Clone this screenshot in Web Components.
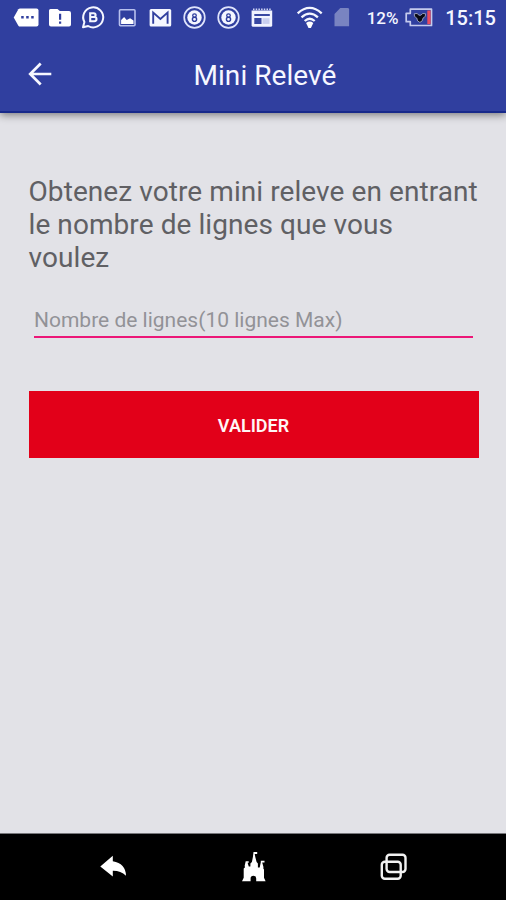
<!DOCTYPE html>
<html lang="fr">
<head>
<meta charset="utf-8">
<title>Mini Relevé</title>
<style>
html,body{margin:0;height:100%;background:#e2e2e7;overflow:hidden}
body{font-family:Roboto,"Liberation Sans",sans-serif}
</style>
</head>
<body>
<mini-app>
  <status-bar slot="status"></status-bar>
  <title-bar slot="header">Mini Relevé</title-bar>
  <intro-text>Obtenez votre mini releve en entrant le nombre de lignes que vous<br>voulez</intro-text>
  <line-field>Nombre de lignes(10 lignes Max)</line-field>
  <submit-button>VALIDER</submit-button>
  <nav-bar slot="nav"></nav-bar>
</mini-app>
<script>
function define(name, html) {
  const t = document.createElement('template');
  t.innerHTML = html;
  customElements.define(name, class extends HTMLElement {
    constructor() {
      super();
      this.attachShadow({mode: 'open'}).append(t.content.cloneNode(true));
    }
  });
}

define('mini-app', `<style>
:host{display:flex;flex-direction:column;height:900px;width:506px;background:#e2e2e7}
main{flex:1;padding:62px 27px 0 28.5px;display:flex;flex-direction:column}
</style>
<slot name="status"></slot><slot name="header"></slot><main><slot></slot></main><slot name="nav"></slot>`);

const ring = `<svg viewBox="0 0 24 24"><circle cx="11.5" cy="12.5" r="10.3" fill="none" stroke="#dfe4fb" stroke-width="1.7"/><circle cx="11.5" cy="12.5" r="7.2" fill="#f4f6ff"/><circle cx="11.5" cy="10.6" r="1.8" fill="none" stroke="#2e3e9e" stroke-width="1.3"/><circle cx="11.5" cy="14.3" r="2.1" fill="none" stroke="#2e3e9e" stroke-width="1.4"/></svg>`;

define('status-bar', `<style>
:host{display:flex;height:35px;background:#303f9f;color:#f4f6ff;box-sizing:border-box;padding:5px 0 0 15px;align-items:flex-start}
svg{display:block;width:24px;height:24px;overflow:visible;flex:none}
.notes{display:flex;gap:9.6px;width:259.2px;flex:none}
.wifi{margin-left:23px}.sim{margin-left:9.5px}
.pct{font-size:17px;font-weight:500;line-height:26px;margin-left:12px;width:33px;white-space:nowrap}
.bat{width:28px;margin-left:5px}
.time{font-size:20px;font-weight:500;line-height:27px;margin-left:12.5px;white-space:nowrap}
</style>
<div class="notes">
<svg viewBox="0 0 24 24"><path d="M5 3.4h16.5a2 2 0 0 1 2 2v14.2a2 2 0 0 1-2 2H5q-1 0-1.6-.9L-1.3 12.5 3.4 4.3Q4 3.4 5 3.4z" fill="#fff"/><path d="M6.2 11h2.5v2.5H6.2zM11.2 11h2.5v2.5h-2.5zM16.2 11h2.5v2.5h-2.5z" fill="#303f9f"/></svg>
<svg viewBox="0 0 24 24"><path d="M1.5 4h7l2.3 2H20a2 2 0 0 1 2 2v11.5a2 2 0 0 1-2 2H2a2 2 0 0 1-2-2V5.5A1.5 1.5 0 0 1 1.5 4z" fill="#fff"/><path d="M10 8.8h2.2v6H10zM10 16.4h2.2v2.3H10z" fill="#303f9f"/></svg>
<svg viewBox="0 0 24 24"><path d="M1 22.3l1.4-5.2A10 10 0 1 1 6.2 21z" fill="none" stroke="#f4f6ff" stroke-width="2" stroke-linejoin="round"/><path d="M8.2 8.2h3.5a1.8 1.8 0 0 1 0 3.8H8.2zm0 3.8h4.2a2 2 0 0 1 0 4.2H8.2z" fill="none" stroke="#f4f6ff" stroke-width="2.1"/></svg>
<svg viewBox="0 0 24 24"><rect x="3.5" y="4.7" width="15.5" height="16" rx="1" fill="none" stroke="#b8c1ee" stroke-width="1.6"/><path d="M5.1 19.1v-4l3-3 2.6 3 3.4-1.8 3.4 2.2v3.6z" fill="#fff"/></svg>
<svg viewBox="0 0 24 24"><rect x=".6" y="4" width="21.6" height="17.5" rx="1.5" fill="#f5f7ff"/><path d="M4.2 18.8V7.6l7.2 6.4 7.2-6.4v11.2" fill="none" stroke="#303f9f" stroke-width="1.9"/></svg>
${ring}${ring}
<svg viewBox="0 0 24 24"><path d="M1.6 5.5h20.6v14.8a1.5 1.5 0 0 1-1.5 1.5H3.1a1.5 1.5 0 0 1-1.5-1.5z" fill="#f1f3ff"/><path d="M3 4.3h18" stroke="#d1d7f5" stroke-width="1.8" stroke-dasharray="1.5 1.2"/><path d="M4.3 9h15.5v2H4.3zM4.3 13h7.2v6H4.3z" fill="#3847a2"/><path d="M12.5 13.2h7v5.7h-7z" fill="#c9cfef"/></svg>
</div>
<svg class="wifi" viewBox="0 0 24 24"><g fill="none" stroke="#f4f6ff" stroke-width="2.3"><path d="M.7 8.3Q12.7-2.5 24.7 8.3"/><path d="M4.5 12.3Q12.7 4.9 20.9 12.3"/><path d="M7.7 16Q12.7 11.4 17.7 16"/></g><path d="M9.1 18q3.6-2.9 7.2 0l-2.4 5h-2.4z" fill="#fff"/></svg>
<svg class="sim" viewBox="0 0 24 24"><path d="M9.3 3.1h7.4a1.4 1.4 0 0 1 1.4 1.4v16.7H3.5V9z" fill="#7984c1"/></svg>
<div class="pct">12%</div>
<svg class="bat" viewBox="0 0 28 24"><path d="M5.3 4.2h21.2v16.3H5.3v-3.8H1.2V8.3h4.1z" fill="none" stroke="#c5cbed" stroke-width="1.7" stroke-linejoin="round"/><path d="M22.3 5.5h3.3v13.7h-3.3z" fill="#e94c60"/><path d="M9.3 8.7q3.2-1.2 4.7 1.5h1.8q1.5-2.7 4.7-1.5.8 3.3-2.4 4.3-.3 3.7-3.2 4.4-2.9-.7-3.2-4.4-3.2-1-2.4-4.3z" fill="#080915" stroke="#a0a6c4" stroke-width=".9"/></svg>
<div class="time">15:15</div>`);

define('title-bar', `<style>
:host{display:grid;grid-template-columns:80px 1fr;height:78px;background:#303f9f;color:#f6f7ff;box-sizing:border-box;border-bottom:2px solid #17298a;box-shadow:0 2px 8px #0007;clip-path:inset(0 0 -14px 0);z-index:1}
svg{display:block;width:24px;height:24px;margin:26.5px 0 0 28px}
h1{margin:24px 0 0 113.5px;font-size:28px;font-weight:400;line-height:34px;letter-spacing:.06px;white-space:nowrap}
</style>
<svg viewBox="0 0 24 24"><path d="M23.3 12H2.5M12.7 1.5L2.2 12l10.5 10.5" fill="none" stroke="#f6f7ff" stroke-width="2.7"/></svg><h1><slot></slot></h1>`);

define('intro-text', `<style>
:host{display:block;width:454px;font-size:28px;line-height:33px;letter-spacing:.08px;color:#606064}
</style><slot></slot>`);

define('line-field', `<style>
:host{display:block;margin:29px 5px 0 5.5px;width:439px;height:35px;border-bottom:2px solid #ec1778;box-sizing:border-box;font-size:21px;line-height:34px;color:#929297;white-space:nowrap}
</style><slot></slot>`);

define('submit-button', `<style>
:host{display:block;margin-top:53px}
button{display:block;width:450px;height:67px;border:0;padding:2px 0 0;background:#e20019;color:#fff5f5;font:600 18px Roboto,sans-serif}
</style><button><slot></slot></button>`);

define('nav-bar', `<style>
:host{display:flex;justify-content:center;gap:110px;height:67px;background:#000;border-top:1px solid #77777b;box-sizing:border-box;padding-top:17px}
svg{display:block;width:30px;height:32px}
</style>
<svg viewBox="0 0 30 32"><path d="M2.3 15.5L14.8 4.7v5.6Q27.7 12.5 28 24.8 22.5 19.5 14.8 19.7v5.8z" fill="#fff"/></svg>
<svg viewBox="0 0 30 32"><path d="M4 30.2l1.7-3.5V17.6l1.2-1-.2-2.1 1-4.3h3v1.6H9.6l1.2 3.6 1.6.2v-3.2l1.5-1.5 1-5 .6-5h3.7v2h-2.5l.7 3.6 1.2 4.4 1.3 1.5v4h1.8l1.1-5.2V9.7h3.7v1.7h-2.3l1.2 4.4v2l.6.6v8.3l1.6 3.5h-9.4v-2.7a2.8 2.8 0 0 0-5.6 0v2.7z" fill="#fff"/></svg>
<svg viewBox="0 0 30 32"><g fill="none" stroke="#f2f2f2" stroke-width="2.4"><rect x="8.6" y="3.7" width="18.9" height="17.3" rx="3"/><rect x="3.8" y="10.7" width="18.9" height="17" rx="3"/></g></svg>`);
</script>
</body>
</html>
